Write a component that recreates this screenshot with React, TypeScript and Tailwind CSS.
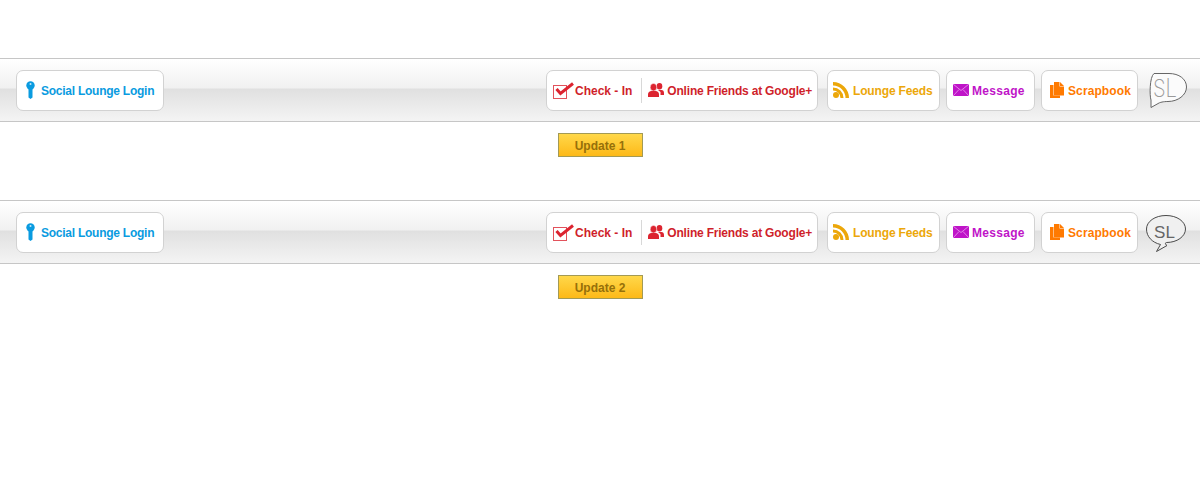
import { type ReactNode } from 'react';

const font = { fontFamily: '"Liberation Sans", Arial, sans-serif' };

function KeyIcon() {
  return (
    <svg width="9" height="18" viewBox="0 0 9 18" className="shrink-0">
      <circle cx="4.500" cy="4.500" r="4.200" fill="#0a9be0" />
      <circle cx="4.500" cy="3" r="1" fill="#bfe6fa" />
      <path d="M2.500 7h4v9.500l-2 1.500-2-1.500z" fill="#0a9be0" />
    </svg>
  );
}

function CheckIcon() {
  return (
    <svg width="21" height="17" viewBox="0 0 21 17" className="shrink-0">
      <rect x="0.500" y="3.500" width="13" height="13" fill="none" stroke="#e2525c" />
      <path d="M3.500 7L7.500 11.500L20 1.500" fill="none" stroke="#dc2430" strokeWidth="3" />
    </svg>
  );
}

function FriendsIcon() {
  return (
    <svg width="16" height="14" viewBox="0 0 16 14" className="shrink-0">
      <ellipse cx="11.500" cy="3.200" rx="2.800" ry="3.200" fill="#dc2430" />
      <path d="M10 7h3.500C15 7 16 8 16 10v2h-3.500V9z" fill="#dc2430" />
      <ellipse cx="5.500" cy="4.200" rx="3.300" ry="3.800" fill="#dc2430" stroke="#fff" strokeWidth="0.500" />
      <path d="M0 14v-2.500C0 9.500 1.500 8 3.500 8h4c2 0 3.500 1.500 3.500 3.500V14z" fill="#dc2430" />
    </svg>
  );
}

function FeedIcon() {
  return (
    <svg width="16" height="16" viewBox="0 0 16 16" className="shrink-0">
      <circle cx="3" cy="13" r="3" fill="#eca70a" />
      <path d="M0 5.500A10.500 10.500 0 0 1 10.500 16H7.500A7.500 7.500 0 0 0 0 8.500z" fill="#eca70a" />
      <path d="M0 0A16 16 0 0 1 16 16H12.500A12.500 12.500 0 0 0 0 3.500z" fill="#eca70a" />
    </svg>
  );
}

function MailIcon() {
  return (
    <svg width="16" height="12" viewBox="0 0 16 12" className="shrink-0">
      <rect width="16" height="12" fill="#bf14c8" />
      <path d="M0 0l8 6.500L16 0M0 12l6-6.500M16 12l-6-6.500" fill="none" stroke="#eb9df0" strokeWidth="0.800" />
    </svg>
  );
}

function PagesIcon() {
  return (
    <svg width="14" height="16" viewBox="0 0 14 16" className="shrink-0">
      <path d="M0 3h3.500v10.500H10V16H0z" fill="#ff7a00" />
      <path d="M4 0h5.500v4.500H14V13.500H4z" fill="#ff7a00" />
      <path d="M10 0l4 4h-4z" fill="#ff7a00" />
    </svg>
  );
}

function Logo({ dark }: { dark?: boolean }) {
  if (dark) {
    return (
      <svg width="42" height="40" viewBox="0 0 42 40" className="shrink-0">
        <path
          d="M21 3.500C32 3.500 40.500 9.500 40.500 17S32 30.500 21.500 30.500C20 30.500 20 32.500 22 33.500L11.500 39.500 15.500 32.500C7 30.500 1.500 24.500 1.500 17 1.500 9.500 10 3.500 21 3.500z"
          fill="#f0f0f0"
          stroke="#4a4a4a"
        />
        <text x="19.500" y="26" textAnchor="middle" fontSize="17" fill="#666" style={font}>
          SL
        </text>
      </svg>
    );
  }
  return (
    <svg width="42" height="40" viewBox="0 0 42 40" className="shrink-0">
      <path
        d="M9 3.500H24C34 3.500 41.500 9 41.500 17S33 31.500 23 31.500C18 31.500 15 32.500 14 33L6 37.500V30C4.500 26 4.500 7 9 3.500z"
        fill="#fbfbfb"
        stroke="#666"
      />
      <text
        x="20"
        y="27"
        textAnchor="middle"
        fontSize="25"
        fontWeight="200"
        fill="#9a9a9a"
        style={{ fontFamily: 'Inter, sans-serif' }}
        textLength="24"
        lengthAdjust="spacingAndGlyphs"
      >
        SL
      </text>
    </svg>
  );
}

function Pill({ children, className }: { children: ReactNode; className?: string }) {
  return (
    <a className={`flex h-[41px] items-center rounded-[7px] border border-[#d2d2d2] bg-white text-xs font-bold ${className ?? ''}`}>
      {children}
    </a>
  );
}

function Bar({ dark }: { dark?: boolean }) {
  return (
    <div className="flex h-[64px] items-center justify-between border-y border-[#c6c6c6] bg-[linear-gradient(to_bottom,#ffffff_0px,#f1f1f1_29px,#e0e0e0_30px,#f4f4f4_62px)] pr-[13px] pl-4">
      <Pill className="w-[148px] gap-[6px] pl-[9px] text-[#0a9be0]">
        <KeyIcon />
        <span className="pt-[2px] tracking-[-0.25px]">Social Lounge Login</span>
      </Pill>
      <div className="flex items-center">
        <Pill className="w-[272px] pl-[6px] text-[#cf1f2b]">
          <CheckIcon />
          <span className="ml-[1px] pt-[2px]">Check - In</span>
          <span className="mr-[6px] ml-[9px] h-[25px] w-px bg-[#d8d8d8]"></span>
          <FriendsIcon />
          <span className="ml-[3px] pt-[2px] tracking-[-0.2px]">Online Friends at Google+</span>
        </Pill>
        <Pill className="ml-[9px] w-[113px] gap-[4px] pl-[5px] text-[#eca70a]">
          <FeedIcon />
          <span className="pt-[2px] tracking-[-0.15px]">Lounge Feeds</span>
        </Pill>
        <Pill className="ml-[6px] w-[89px] gap-[3px] pl-[6px] text-[#bf14c8]">
          <MailIcon />
          <span className="pt-[2px] tracking-[0.3px]">Message</span>
        </Pill>
        <Pill className="ml-[6px] w-[97px] gap-[4px] pl-[8px] text-[#ff7a00]">
          <PagesIcon />
          <span className="pt-[2px] tracking-[0.1px]">Scrapbook</span>
        </Pill>
        <div className="ml-[7px]">
          <Logo dark={dark} />
        </div>
      </div>
    </div>
  );
}

function UpdateButton({ label }: { label: string }) {
  return (
    <div className="flex justify-center pt-[11px]">
      <button className="h-[24px] w-[85px] border border-[#a39a55] bg-[linear-gradient(to_bottom,#ffd84a,#fdb918)] pt-[2px] text-xs font-bold text-[#96700a]">
        {label}
      </button>
    </div>
  );
}

export default function App() {
  return (
    <div className="min-h-[500px] bg-white pt-[58px]" style={font}>
      <Bar />
      <div className="h-[78px]">
        <UpdateButton label="Update 1" />
      </div>
      <Bar dark />
      <UpdateButton label="Update 2" />
    </div>
  );
}
